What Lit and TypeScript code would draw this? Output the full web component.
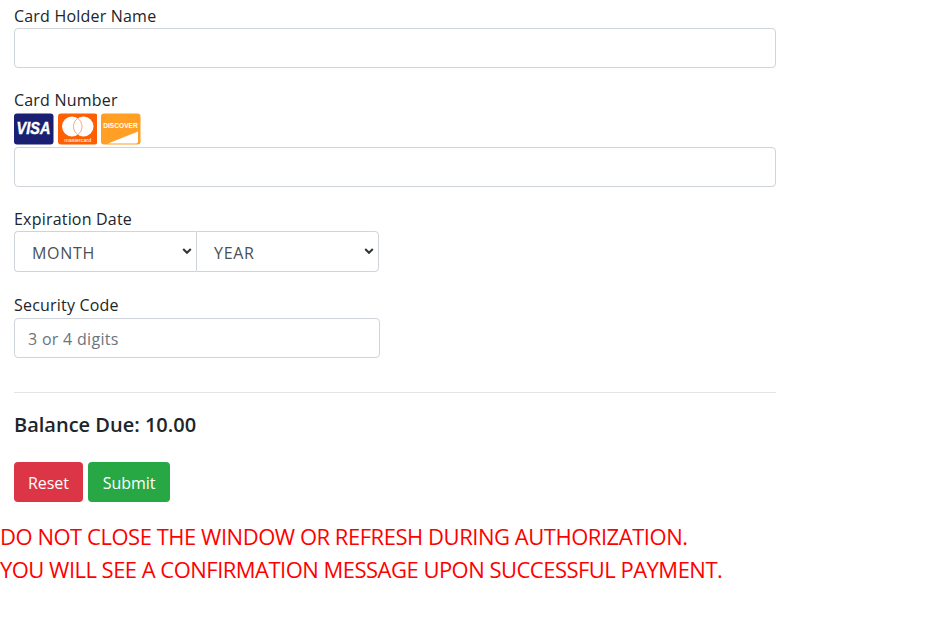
import { LitElement, html, css } from "lit";
import { customElement } from "lit/decorators.js";

@customElement("app-root")
export class AppRoot extends LitElement {
  static styles = css`
    :host { display: block; font-family: "Open Sans", "Noto Sans", sans-serif; font-size: 16px; line-height: 24px; color: #212529; }
    * { box-sizing: border-box; }
    .form { width: 776px; padding: 4px 0 0 14px; display: flex; flex-direction: column; }
    .field { display: flex; flex-direction: column; margin-bottom: 20px; }
    label { display: block; letter-spacing: 0.2px; }
    input {
      display: block; height: 40px; width: 100%; border: 1px solid #ced4da; border-radius: 4px;
      padding: 7px 13px 5px; font: inherit; letter-spacing: 0.3px; color: #495057; background: #fff; outline: none;
    }
    input::placeholder { color: #6c757d; opacity: 1; }
    .cards { display: flex; gap: 4px; height: 32px; margin: 1px 0 2px; }
    .cards svg { display: block; width: 39.5px; height: 32px; }
    .selects { display: flex; width: 365px; height: 41px; }
    .sel {
      flex: 1; position: relative; display: flex; align-items: center; padding: 2px 0 0 17px;
      border: 1px solid #ced4da; color: #495057; background: #fff; letter-spacing: 0.7px;
    }
    .sel:first-child { border-radius: 4px 0 0 4px; border-right: 0; }
    .sel:last-child { border-radius: 0 4px 4px 0; }
    .chev { position: absolute; right: 4px; top: 15px; width: 10px; height: 8px; }
    .short { width: 366px; margin-top: 1px; }
    .short label { margin-bottom: 1px; }
    hr { width: 762px; margin: 14px 0 0; border: 0; border-top: 1px solid #e3e4e6; }
    .due { font-size: 20px; font-weight: 600; line-height: 30px; margin: 17px 0 0; letter-spacing: 0; }
    .actions { display: flex; gap: 5px; margin-top: 22px; }
    button {
      height: 40px; border: 0; border-radius: 4px; color: #fff; font: inherit; letter-spacing: -0.05px; padding: 2px 0 0;
    }
    .reset { background: #dc3545; width: 69px; }
    .submit { background: #28a745; width: 82px; }
    .warn { color: #ff0000; font-size: 22px; line-height: 33px; margin-top: 18px; }
    .warn div { letter-spacing: -0.47px; }
    .warn div + div { letter-spacing: -0.52px; }
  `;

  render() {
    const chev = html`<svg class="chev" viewBox="0 0 10 8"><path d="M1.2 2 L5 5.8 L8.8 2" fill="none" stroke="#333" stroke-width="2"/></svg>`;
    return html`
      <div class="form">
        <div class="field">
          <label>Card Holder Name</label>
          <input type="text" />
        </div>
        <div class="field">
          <label>Card Number</label>
          <div class="cards">
            <svg viewBox="0 0 39.5 32">
              <rect y="0.5" width="39.5" height="31" rx="3" fill="#1a1f71"/>
              <text transform="translate(19.5 20.5) scale(1 1.15)" text-anchor="middle" font-family="Liberation Sans" font-style="italic" font-weight="700" font-size="14.5" stroke="#fff" stroke-width="0.4" fill="#fff">VISA</text>
            </svg>
            <svg viewBox="0 0 39.5 32">
              <rect y="0.5" width="39.5" height="31" rx="3" fill="#ff5f00"/>
              <circle cx="14" cy="13.5" r="10" fill="#fff"/>
              <circle cx="25.5" cy="13.5" r="10" fill="#fff"/>
              <path d="M19.75 5.3 a10 10 0 0 1 0 16.4 a10 10 0 0 1 0 -16.4z" fill="#fff" stroke="#ff9a6a" stroke-width="0.9"/>
              <text x="19.75" y="28.5" text-anchor="middle" font-family="Liberation Sans" font-size="5.4" fill="#fff">mastercard</text>
            </svg>
            <svg viewBox="0 0 39.5 32">
              <rect y="0.5" width="39.5" height="31" rx="3" fill="#ff9f25"/>
              <text x="19.5" y="15" text-anchor="middle" font-family="Liberation Sans" font-weight="700" font-size="6.6" fill="#fff">DISCOVER</text>
              <path d="M7 30.5 L37 18.5 V28.5 a2 2 0 0 1 -2 2 Z" fill="#fff"/>
            </svg>
          </div>
          <input type="text" />
        </div>
        <div class="field">
          <label>Expiration Date</label>
          <div class="selects">
            <div class="sel">MONTH${chev}</div>
            <div class="sel">YEAR${chev}</div>
          </div>
        </div>
        <div class="field short">
          <label>Security Code</label>
          <input type="text" placeholder="3 or 4 digits" />
        </div>
        <hr />
        <div class="due">Balance Due: 10.00</div>
        <div class="actions">
          <button class="reset">Reset</button>
          <button class="submit">Submit</button>
        </div>
      </div>
      <div class="warn">
        <div>DO NOT CLOSE THE WINDOW OR REFRESH DURING AUTHORIZATION.</div>
        <div>YOU WILL SEE A CONFIRMATION MESSAGE UPON SUCCESSFUL PAYMENT.</div>
      </div>
    `;
  }
}
